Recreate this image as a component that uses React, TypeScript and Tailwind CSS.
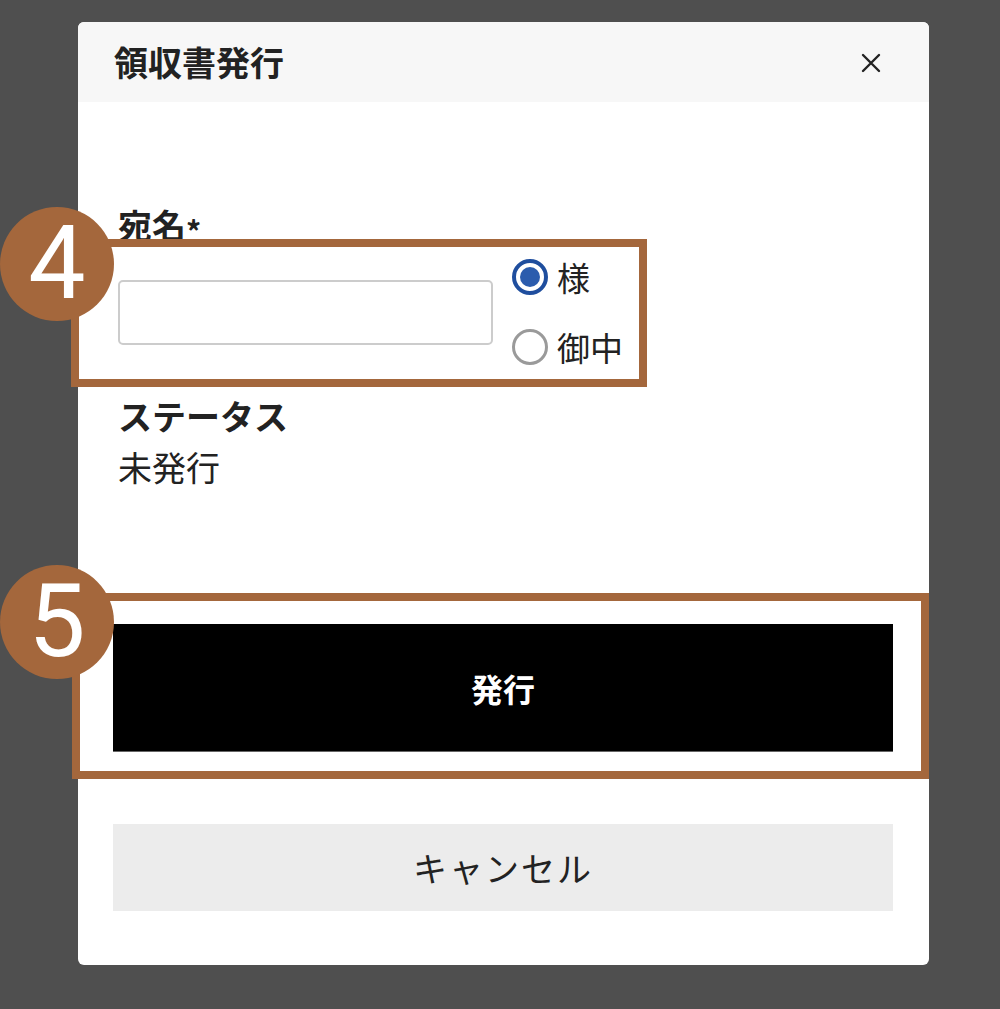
import React from "react";

const jp = { fontFamily: '"Noto Sans CJK JP", "Noto Sans", sans-serif' };

function Radio({ checked, label }: { checked: boolean; label: string }) {
  return (
    <label className="flex h-[48px] items-center gap-[9px]">
      {checked ? (
        <span className="flex h-[36px] w-[36px] items-center justify-center rounded-full border-[4px] border-[#1f4e9e] bg-white">
          <span className="h-[20px] w-[20px] rounded-full bg-[#2b5cad]" />
        </span>
      ) : (
        <span className="h-[36px] w-[36px] rounded-full border-[3px] border-[#9a9a9a] bg-white" />
      )}
      <span className="text-[33px] leading-[38px] text-[#222]">{label}</span>
    </label>
  );
}

function Marker({ n, top }: { n: string; top: number }) {
  return (
    <div
      className="absolute left-0 flex h-[114px] w-[114px] items-center justify-center rounded-full bg-[#a4673c] text-[102px] font-normal leading-none text-white"
      style={{ top, fontFamily: 'Roboto, "Liberation Sans", sans-serif' }}
    >
      <span className="-mt-[2px]">{n}</span>
    </div>
  );
}

export default function App() {
  return (
    <div className="relative h-[1009px] w-[1000px] overflow-hidden bg-[#4f4f4f] pl-[78px] pt-[22px]" style={jp}>
      <div className="flex h-[943px] w-[851px] flex-col overflow-hidden rounded-[6px] bg-white">
        <div className="flex h-[80px] items-center justify-between bg-[#f7f7f7] pl-[36px] pr-[48px]">
          <h1 className="text-[34px] font-bold leading-[38px] text-[#222]">領収書発行</h1>
          <svg width="20" height="20" viewBox="0 0 20 20" className="mt-[1px]">
            <path d="M2 2 L18 18 M18 2 L2 18" stroke="#222" strokeWidth="2.4" strokeLinecap="round" />
          </svg>
        </div>
        <div className="flex flex-col px-[40px] pt-[104px]">
          <div className="text-[34px] font-bold leading-[38px] text-[#222]">
            宛名<span className="inline-block translate-y-[4px] text-[30px]">*</span>
          </div>
          <div className="mt-[8px] flex items-center gap-[19px]">
            <input
              type="text"
              className="h-[65px] w-[375px] rounded-[5px] border-2 border-[#cccccc] bg-white outline-none"
            />
            <div className="flex flex-col gap-[22px]">
              <Radio checked label="様" />
              <Radio checked={false} label="御中" />
            </div>
          </div>
          <div className="mt-[26px] text-[34px] font-bold leading-[38px] text-[#222]">ステータス</div>
          <div className="mt-[13px] text-[34px] leading-[38px] text-[#222]">未発行</div>
        </div>
        <div className="flex flex-col px-[35px] pt-[138px]">
          <button className="flex h-[128px] w-[780px] items-center justify-center border-b border-[#666] bg-black text-[32px] font-bold text-white">
            発行
          </button>
          <button className="mt-[72px] flex h-[87px] w-[780px] items-center justify-center bg-[#ececec] text-[34px] tracking-[2px] text-[#222]">
            キャンセル
          </button>
        </div>
      </div>

      <div className="absolute left-[71px] top-[239px] h-[148px] w-[576px] border-[8px] border-[#a4673c]" />
      <div className="absolute left-[72px] top-[593px] h-[186px] w-[857px] border-[8px] border-[#a4673c]" />
      <Marker n="4" top={207} />
      <Marker n="5" top={565} />
    </div>
  );
}
